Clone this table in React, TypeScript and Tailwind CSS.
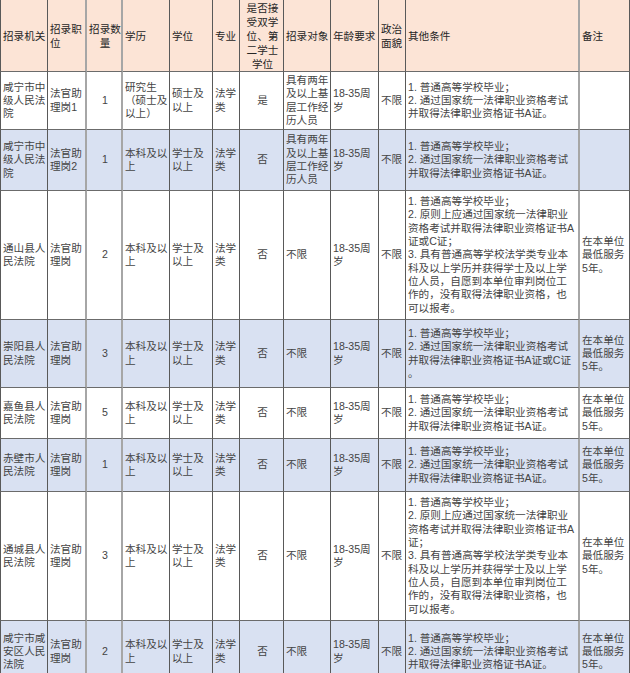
import React from "react"

// 招录计划表：列宽、行高按截图像素对齐
const colWidths = "grid-cols-[48px_39px_36px_47px_43px_27px_44px_47px_48px_27px_174px_50px]"
const rowHeights = "grid-rows-[72px_58px_61px_129px_68px_51px_53px_129px_62px]"

const rightBorders = [
  "border-r border-r-[#595959]",
  "border-r-2 border-r-[#a6a6a6]",
  "border-r-2 border-r-[#a6a6a6]",
  "border-r border-r-[#595959]",
  "border-r border-r-[#595959]",
  "border-r border-r-[#595959]",
  "border-r border-r-[#595959]",
  "border-r border-r-[#595959]",
  "border-r border-r-[#595959]",
  "border-r border-r-[#595959]",
  "border-r-2 border-r-[#a6a6a6]",
  "border-r border-r-[#595959]",
]

const centered = [2, 6]

const header: string[][] = [
  ["招录机关"],
  ["招录职", "位"],
  ["招录数", "量"],
  ["学历"],
  ["学位"],
  ["专业"],
  ["是否接", "受双学", "位、第", "二学士", "学位"],
  ["招录对象"],
  ["年龄要求"],
  ["政治", "面貌"],
  ["其他条件"],
  ["备注"],
]

const condA = ["1. 普通高等学校毕业；", "2. 通过国家统一法律职业资格考试", "并取得法律职业资格证书A证。"]
const condAC = [
  "1. 普通高等学校毕业；",
  "2. 原则上应通过国家统一法律职业",
  "资格考试并取得法律职业资格证书A",
  "证或C证；",
  "3. 具有普通高等学校法学类专业本",
  "科及以上学历并获得学士及以上学",
  "位人员，自愿到本单位审判岗位工",
  "作的，没有取得法律职业资格，也",
  "可以报考。",
]
const condA3 = [...condAC.slice(0, 3), "证；", ...condAC.slice(4)]
const note = ["在本单位", "最低服务", "5年。"]
const exp = ["具有两年", "及以上基", "层工作经", "历人员"]
const age = ["18-35周", "岁"]
const bachelor = ["本科及以", "上"]
const degree = ["学士及", "以上"]
const major = ["法学", "类"]

interface Row {
  blue: boolean
  cells: string[][]
}

const rows: Row[] = [
  {
    blue: false,
    cells: [
      ["咸宁市中", "级人民法", "院"], ["法官助", "理岗1"], ["1"], ["研究生", "（硕士及", "以上）"],
      ["硕士及", "以上"], major, ["是"], exp, age, ["不限"], condA, [],
    ],
  },
  {
    blue: true,
    cells: [
      ["咸宁市中", "级人民法", "院"], ["法官助", "理岗2"], ["1"], bachelor,
      degree, major, ["否"], exp, age, ["不限"], condA, [],
    ],
  },
  {
    blue: false,
    cells: [
      ["通山县人", "民法院"], ["法官助", "理岗"], ["2"], bachelor,
      degree, major, ["否"], ["不限"], age, ["不限"], condAC, note,
    ],
  },
  {
    blue: true,
    cells: [
      ["崇阳县人", "民法院"], ["法官助", "理岗"], ["3"], bachelor,
      degree, major, ["否"], ["不限"], age, ["不限"],
      ["1. 普通高等学校毕业；", "2. 通过国家统一法律职业资格考试", "并取得法律职业资格证书A证或C证", "。"], note,
    ],
  },
  {
    blue: false,
    cells: [
      ["嘉鱼县人", "民法院"], ["法官助", "理岗"], ["5"], bachelor,
      degree, major, ["否"], ["不限"], age, ["不限"], condA, note,
    ],
  },
  {
    blue: true,
    cells: [
      ["赤壁市人", "民法院"], ["法官助", "理岗"], ["1"], bachelor,
      degree, major, ["否"], ["不限"], age, ["不限"], condA, note,
    ],
  },
  {
    blue: false,
    cells: [
      ["通城县人", "民法院"], ["法官助", "理岗"], ["3"], bachelor,
      degree, major, ["否"], ["不限"], age, ["不限"], condA3, note,
    ],
  },
  {
    blue: true,
    cells: [
      ["咸宁市咸", "安区人民", "法院"], ["法官助", "理岗"], ["2"], bachelor,
      degree, major, ["否"], ["不限"], age, ["不限"], condA, note,
    ],
  },
]

function Cell({ lines, col, bg, head }: { lines: string[]; col: number; bg: string; head?: boolean }) {
  const center = centered.includes(col)
  return (
    <div
      className={`flex flex-col justify-center overflow-hidden border-b border-b-[#6b6b6b] pl-[2px] ${bg} ${rightBorders[col]} ${
        col === 0 ? "border-l border-l-[#595959]" : ""
      } ${center ? "items-center pl-0 text-center" : "items-start"} ${
        head ? "leading-[14px] text-[#262626]" : "leading-[13.3px] text-[#444444]"
      }`}
    >
      {lines.map((l, i) => (
        <div key={i} className="whitespace-nowrap">
          {l}
        </div>
      ))}
    </div>
  )
}

export default function App() {
  return (
    <div className="h-[673px] w-[630px] overflow-hidden bg-white">
      <div
        className={`grid ${colWidths} ${rowHeights} text-[10.6px] font-['Liberation_Sans','Noto_Sans_CJK_SC',sans-serif]`}
      >
        {header.map((lines, c) => (
          <Cell key={`h${c}`} lines={lines} col={c} bg="bg-[#fce4d6]" head />
        ))}
        {rows.map((row, r) =>
          row.cells.map((lines, c) => (
            <Cell key={`${r}-${c}`} lines={lines} col={c} bg={row.blue ? "bg-[#d9e1f2]" : "bg-white"} />
          ))
        )}
      </div>
    </div>
  )
}
